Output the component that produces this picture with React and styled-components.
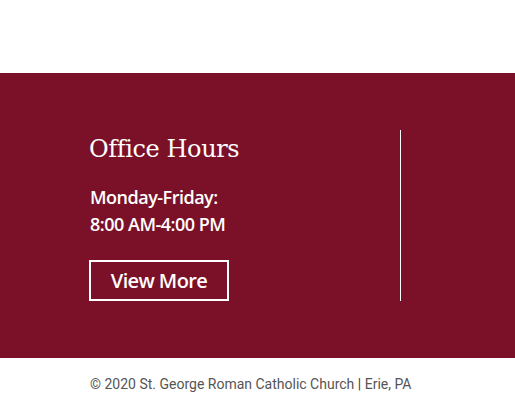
import React from 'react';
import styled, { createGlobalStyle } from 'styled-components';

const GlobalStyle = createGlobalStyle`
  html, body {
    margin: 0;
    padding: 0;
    background: #fff;
  }
`;

const Page = styled.div`
  padding-top: 73px;
`;

const Band = styled.section`
  background: #7b1128;
  height: 285px;
  box-sizing: border-box;
  padding: 57px 0 0 89px;
  display: flex;
`;

const InfoColumn = styled.div`
  width: 311px;
  display: flex;
  flex-direction: column;
  align-items: flex-start;
`;

const Divider = styled.div`
  width: 1px;
  height: 171px;
  background: #fff;
`;

const Heading = styled.h2`
  margin: 1px 0 0;
  font-family: 'DejaVu Serif', 'Liberation Serif', serif;
  font-weight: 400;
  font-size: 24px;
  line-height: 36px;
  letter-spacing: -0.4px;
  color: #fff;
`;

const Hours = styled.p`
  margin: 17px 0 0 1px;
  font-family: 'Open Sans', sans-serif;
  font-weight: 600;
  font-size: 18px;
  line-height: 27px;
  letter-spacing: -0.5px;
  color: #fff;
`;

const MoreButton = styled.a`
  margin-top: 22px;
  box-sizing: border-box;
  width: 140px;
  height: 41px;
  border: 2px solid #fff;
  display: flex;
  align-items: center;
  justify-content: center;
  font-family: 'Open Sans', sans-serif;
  font-weight: 600;
  font-size: 20px;
  letter-spacing: -0.6px;
  color: #fff;
  text-decoration: none;
`;

const Footer = styled.footer`
  padding: 16px 0 0 90px;
  font-family: Roboto, sans-serif;
  font-size: 14px;
  line-height: 20px;
  color: #555;
`;

const Sep = styled.span`
  color: #7b1128;
`;

export default function App() {
  return (
    <Page>
      <GlobalStyle />
      <Band>
        <InfoColumn>
          <Heading>Office Hours</Heading>
          <Hours>
            Monday-Friday:
            <br />
            8:00 AM-4:00 PM
          </Hours>
          <MoreButton href="#">View More</MoreButton>
        </InfoColumn>
        <Divider />
      </Band>
      <Footer>
        © 2020 St. George Roman Catholic Church <Sep>|</Sep> Erie, PA
      </Footer>
    </Page>
  );
}
